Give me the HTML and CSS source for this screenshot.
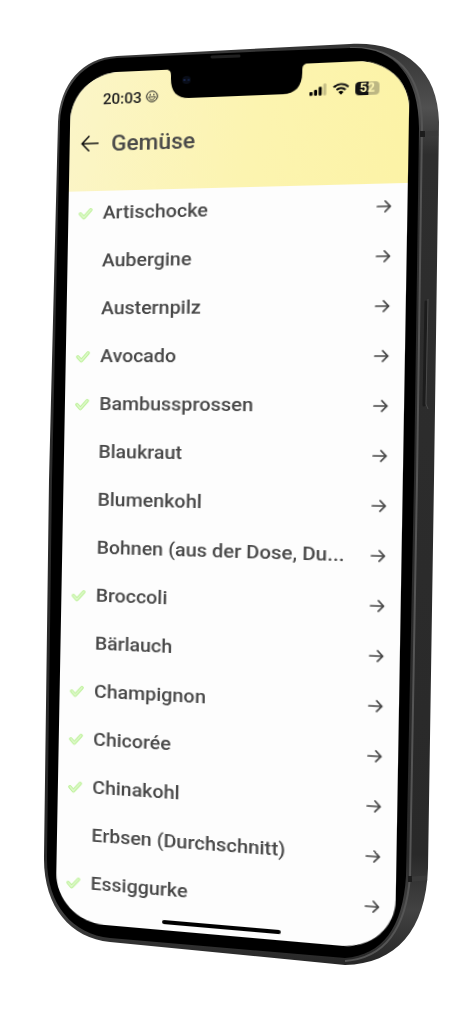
FILE: index.html
```
<!DOCTYPE html>
<html lang="de">
<head>
    <meta charset="utf-8">
    <meta name="viewport" content="width=device-width, initial-scale=1">
    <title>Gemüse</title>
    <link rel="stylesheet" href="styles.css">
</head>
<body>
    <!-- shared icons -->
    <svg class="sprite" aria-hidden="true">
      <symbol id="check" viewBox="0 0 14 13">
        <path d="M2 6.8 L5.4 10.6 L12 2.8" fill="none" stroke="#b9f093" stroke-width="3.4" stroke-linecap="round" stroke-linejoin="round"/>
        <path d="M2 6.8 L5.4 10.6 L12 2.8" fill="none" stroke="#def9ca" stroke-width="1.6" stroke-linecap="round" stroke-linejoin="round"/>
      </symbol>
      <symbol id="arrow" viewBox="0 0 14 14">
        <path d="M1 7 H12.5 M8 2 L12.6 7 L8 12" fill="none" stroke="currentColor" stroke-width="1.7" stroke-linecap="round" stroke-linejoin="round"/>
      </symbol>
    </svg>

    <div class="device">
      <svg class="frame" viewBox="0 0 474 1024" aria-hidden="true">
        <defs>
          <linearGradient id="metal" x1="0" y1="0" x2="0" y2="1">
            <stop offset="0" stop-color="#333"/>
            <stop offset="0.07" stop-color="#505050"/>
            <stop offset="0.12" stop-color="#2e2e2e"/>
            <stop offset="0.88" stop-color="#292929"/>
            <stop offset="0.94" stop-color="#424242"/>
            <stop offset="1" stop-color="#262626"/>
          </linearGradient>
        </defs>
        <path fill="url(#metal)" d="M58 122 C60 84 82 58 117 56 L250 49 L350 44 C402 41 438 68 439 122 L434 480 L428 868 C426 930 396 964 345 965 L110 942 C70 938 43 906 44 856 L49 480 Z"/>
        <path fill="none" stroke="#555" stroke-width="2" d="M350 48 C396 46 422 74 422 126 L417 480 L410 876 C406 930 384 958 345 961"/>
        <path fill="#000" d="M60 122 C62 86 84 60 117 58 L250 52 L350 48 C394 46 419 76 419 128 L414 480 L406 876 C403 928 382 955 345 958 L110 938 C72 934 46 904 47 856 L52 480 Z"/>
        <path fill="none" stroke="#202020" stroke-width="3" d="M212 57 L239 56" stroke-linecap="round"/>
        <path fill="none" stroke="#1c1c1c" stroke-width="6" d="M420 134 L425 134 M408 879 L412 879"/>
        <path fill="none" stroke="#3a3a3a" stroke-width="5" d="M425 134 L438 133 M412 879 L427 878"/>
        <path fill="none" stroke="#1c1c1c" stroke-width="3" stroke-linecap="round" d="M426 302 L424 405"/>
        <path fill="none" stroke="#4a4a4a" stroke-width="1" d="M428 299 L426 404 L428 409"/>
      </svg>

      <main class="screen">
        <header class="header">
          <div class="status">
            <span class="time">20:03</span>
            <svg class="smiley" viewBox="0 0 12 12" aria-hidden="true">
              <circle cx="6" cy="6" r="5.3" fill="none" stroke="#222" stroke-width="1"/>
              <circle cx="4.2" cy="4.2" r="0.8" fill="#222"/>
              <circle cx="7.8" cy="4.2" r="0.8" fill="#222"/>
              <path d="M2.8 6.4 H9.2 C9 10.2 3 10.2 2.8 6.4 Z" fill="none" stroke="#222" stroke-width="0.8"/>
            </svg>
            <svg class="notch" viewBox="0 0 134 30" aria-hidden="true">
              <path d="M0 0 C4 0 5 2 5 7 V9 C5 22 11 29 23 29 H111 C123 29 129 22 129 9 V7 C129 2 130 0 134 0 Z"/>
              <circle cx="20" cy="11" r="4" fill="#090d18"/>
              <circle cx="18" cy="11" r="1" fill="#1c2c58"/>
              <circle cx="22" cy="11" r="1" fill="#16244a"/>
            </svg>
            <div class="signals">
              <svg class="bars" viewBox="0 0 17 12" aria-hidden="true">
                <rect x="0" y="8" width="3" height="4" rx="1"/>
                <rect x="4.5" y="6" width="3" height="6" rx="1"/>
                <rect x="9" y="3" width="3" height="9" rx="1"/>
                <rect x="13.5" y="0" width="3" height="12" rx="1" opacity="0.22"/>
              </svg>
              <svg class="wifi" viewBox="0 0 16 12" aria-hidden="true">
                <path d="M1.2 4.4 C5 0.4 11 0.4 14.8 4.4 M3.8 7 C6.2 4.6 9.8 4.6 12.2 7" fill="none" stroke="#111" stroke-width="1.9"/>
                <path d="M5.6 9 C7 7.8 9 7.8 10.4 9 L8 11.8 Z"/>
              </svg>
              <div class="battery">52</div>
            </div>
          </div>
          <div class="title">
            <button class="back" aria-label="Zurück">
              <svg viewBox="0 0 18 18" aria-hidden="true">
                <path d="M17 9 H1.5 M8 1.8 L1.2 9 L8 16.2" fill="none" stroke="#111" stroke-width="1.6" stroke-linecap="round" stroke-linejoin="round"/>
              </svg>
            </button>
            <h1>Gemüse</h1>
          </div>
        </header>

        <ul class="list"></ul>
        <div class="home"></div>
      </main>
    </div>

    <script>
      const foods = [
        ['Artischocke', true],
        ['Aubergine', false],
        ['Austernpilz', false],
        ['Avocado', true],
        ['Bambussprossen', true],
        ['Blaukraut', false],
        ['Blumenkohl', false],
        ['Bohnen (aus der Dose, Du...', false],
        ['Broccoli', true],
        ['Bärlauch', false],
        ['Champignon', true],
        ['Chicorée', true],
        ['Chinakohl', true],
        ['Erbsen (Durchschnitt)', false],
        ['Essiggurke', true]
      ];

      document.querySelector('.list').innerHTML = foods.map(([name, ok]) => `
        <li>
          <a class="food" href="#">
            <span class="mark">${ok ? '<svg><use href="#check"/></svg>' : ''}</span>
            <span class="name">${name}</span>
            <svg class="go"><use href="#arrow"/></svg>
          </a>
        </li>`).join('');
    </script>
</body>
</html>
```

FILE: styles.css
```
* {
margin: 0;
padding: 0;
box-sizing: border-box;
}

body {
background-color: #fff;
font-family: Roboto, "Liberation Sans", sans-serif;
color: #484848;
}

.sprite {
display: block;
width: 0;
height: 0;
}

.device {
position: relative;
max-width: 474px;
min-height: 100vh;
margin: 0 auto;
padding: 74px 83px 0 71px;
}

.frame {
position: absolute;
top: 0;
left: 0;
width: 100%;
}

/* the whole screen is turned in space together with the phone */
.screen {
position: relative;
display: flex;
flex-direction: column;
overflow: hidden;
border-radius: 48px;
background-color: #fdfdfd;
box-shadow: 0 0 1px #000;
transform-origin: 0 0;
transform: matrix3d(1.006, -0.0446, 0, -0.000157, -0.0182, 0.9888, 0, -0.0000044, 0, 0, 1, 0, 0, 0, 0, 1);
}

.header {
height: 119px;
background: linear-gradient(100deg, #fbf5c8, #fcf4b0 55%, #fcf3a6);
}

.status {
position: relative;
display: flex;
align-items: center;
gap: 4px;
height: 52px;
padding: 0 27px 0 32px;
color: #222;
}

.time {
font-size: 15px;
font-weight: 500;
line-height: 20px;
padding-top: 2px;
}

.smiley {
width: 12px;
height: 12px;
}

.notch {
position: absolute;
top: 0;
left: 50%;
width: 134px;
height: 30px;
margin-left: -67px;
}

.signals {
display: flex;
align-items: center;
gap: 5px;
margin-left: auto;
}

.bars {
width: 16px;
height: 12px;
}

.wifi {
width: 16px;
height: 12px;
}

.battery {
width: 22px;
height: 13px;
border-radius: 4px;
background: linear-gradient(90deg, #111 55%, #bdb783 55%);
color: #fcf4b0;
font-size: 12px;
font-weight: 700;
line-height: 13px;
text-align: center;
}

.title {
display: flex;
align-items: center;
gap: 12px;
height: 38px;
padding-left: 11px;
}

.back {
width: 18px;
height: 18px;
border: none;
background: none;
cursor: pointer;
}

.back svg {
display: block;
width: 18px;
height: 18px;
}

h1 {
font-size: 22px;
font-weight: 500;
}

.list {
margin-top: -2px;
list-style: none;
}

.food {
display: flex;
align-items: center;
height: 48px;
padding: 0 14px 0 10px;
color: inherit;
text-decoration: none;
}

.mark {
width: 24px;
height: 13px;
}

.mark svg {
display: block;
width: 14px;
height: 13px;
}

.name {
flex: 1;
min-width: 0;
margin-right: 8px;
overflow: hidden;
font-size: 19px;
font-weight: 500;
line-height: 28px;
text-overflow: ellipsis;
white-space: nowrap;
}

.go {
width: 14px;
height: 14px;
}

.home {
width: 112px;
height: 4px;
margin: 6px auto;
border-radius: 2px;
background-color: #000;
}
```
